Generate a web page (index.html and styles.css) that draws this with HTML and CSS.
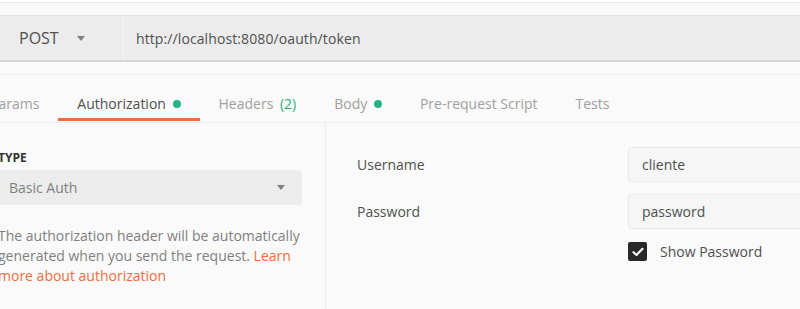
FILE: index.html
```html
<!DOCTYPE html>
<html lang="en">
<head>
    <meta charset="UTF-8">
    <title>Postman - Authorization</title>
    <link rel="stylesheet" href="styles.css">
</head>
<body>

<div class="top-strip"></div>

<div class="url-bar">
    <div class="method">POST <span class="caret"></span></div>
    <div class="url">http://localhost:8080/oauth/token</div>
</div>

<div class="tabs">
    <div class="tab">Params</div>
    <div class="tab active">Authorization <span class="dot"></span></div>
    <div class="tab">Headers <span class="count">(2)</span></div>
    <div class="tab">Body <span class="dot"></span></div>
    <div class="tab">Pre-request Script</div>
    <div class="tab">Tests</div>
</div>

<div class="auth">
    <div class="auth-left">
        <div class="type-label">TYPE</div>
        <div class="select">Basic Auth <span class="caret"></span></div>
        <p class="help">The authorization header will be automatically generated when you send the request. <a href="#">Learn more about authorization</a></p>
    </div>

    <div class="auth-right">
        <div class="fields">
            <label class="field-label">Username</label>
            <div class="input">cliente</div>
            <label class="field-label">Password</label>
            <div class="input">password</div>
            <div></div>
            <div class="show-pass">
                <span class="checkbox">
                    <svg width="12" height="10" viewBox="0 0 12 10"><path d="M1.5 5.2 L4.5 8 L10.5 1.8" fill="none" stroke="#fff" stroke-width="2.2" stroke-linecap="round" stroke-linejoin="round"/></svg>
                </span>
                Show Password
            </div>
        </div>
    </div>
</div>

</body>
</html>
```

FILE: styles.css
```css
html {
    overflow: hidden;
}
body {
    margin: 0;
    background-color: #fafafa;
    font-family: 'Open Sans', 'Noto Sans', sans-serif;
    font-size: 14px;
    color: #505050;
}
.top-strip {
    height: 2px;
    background: #fff;
    border-bottom: 1px solid #e6e6e6;
    margin-bottom: 12px;
}
.url-bar {
    display: flex;
    height: 44px;
    background: #ececec;
    border-top: 1px solid #e2e2e2;
    border-bottom: 2px solid #d6d6d6;
}
.method {
    width: 104px;
    padding-left: 19px;
    display: flex;
    align-items: center;
    font-size: 16px;
    color: #505050;
    border-right: 1px solid #f6f6f6;
}
.method .caret {
    margin-left: 18px;
}
.caret {
    display: inline-block;
    width: 0;
    height: 0;
    border-left: 4px solid transparent;
    border-right: 4px solid transparent;
    border-top: 5px solid #808080;
}
.url {
    padding-left: 12px;
    display: flex;
    align-items: center;
    color: #505050;
    letter-spacing: 0.1px;
}
.tabs {
    display: flex;
    margin-top: 12px;
    margin-left: -29px;
    border-top: 1px solid #ececec;
    border-bottom: 1px solid #ececec;
    padding-bottom: 1px;
}
.tab {
    padding: 19px 19px 5px;
    line-height: 19px;
    color: #a0a0a0;
    border-bottom: 3px solid transparent;
    white-space: nowrap;
}
.tab.active {
    color: #505050;
    border-bottom-color: #f26b3a;
}
.dot {
    display: inline-block;
    width: 8px;
    height: 8px;
    border-radius: 50%;
    background: #26b47f;
    margin-left: 3px;
    vertical-align: 1px;
}
.count {
    color: #26b47f;
    margin-left: 3px;
}
.auth {
    display: flex;
    height: 200px;
}
.auth-left {
    margin-left: -2px;
    width: 305px;
    padding: 27px 23px 0 0;
    border-right: 1px solid #ececec;
}
.type-label {
    font-size: 12px;
    font-weight: bold;
    line-height: 16px;
    color: #333;
}
.select {
    margin-top: 4px;
    width: 293px;
    height: 35px;
    padding-left: 11px;
    background: #ececec;
    border-radius: 3px;
    display: flex;
    align-items: center;
    justify-content: space-between;
    color: #808080;
}
.select .caret {
    margin-right: 17px;
}
.help {
    margin: 21px 0 0;
    line-height: 20px;
    color: #808080;
}
.help a {
    color: #f26b3a;
    text-decoration: none;
}
.auth-right {
    flex: 1;
    padding: 24px 0 0 31px;
}
.fields {
    display: grid;
    grid-template-columns: 271px 220px;
    row-gap: 12px;
    align-items: center;
}
.field-label {
    color: #505050;
}
.input {
    height: 33px;
    border: 1px solid #ebebeb;
    border-radius: 3px;
    background: #f6f6f6;
    padding-left: 13px;
    display: flex;
    align-items: center;
    color: #505050;
}
.show-pass {
    display: flex;
    align-items: center;
    margin-top: 1px;
    color: #505050;
}
.checkbox {
    width: 19px;
    height: 19px;
    border-radius: 2px;
    background: #282828;
    display: flex;
    align-items: center;
    justify-content: center;
    margin-right: 13px;
}
```
